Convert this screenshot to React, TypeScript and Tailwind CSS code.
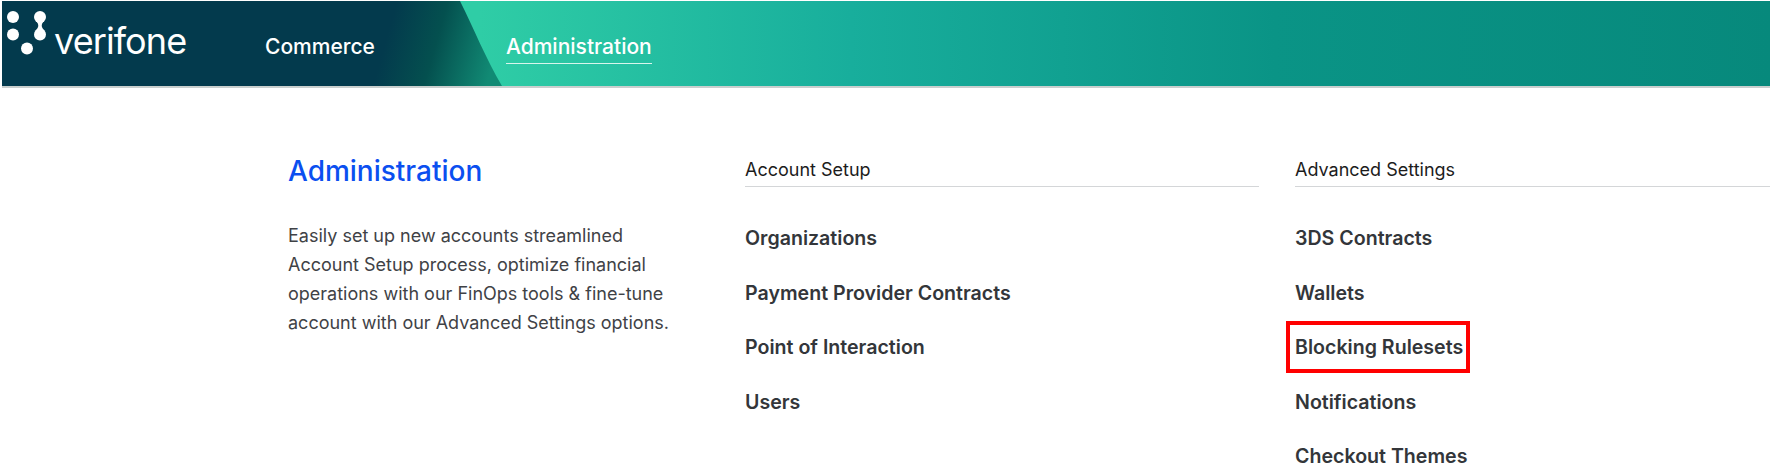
const accountSetup = ["Organizations", "Payment Provider Contracts", "Point of Interaction", "Users"];
const advancedSettings = ["3DS Contracts", "Wallets", "Blocking Rulesets", "Notifications", "Checkout Themes"];

function Logo() {
  return (
    <div className="flex w-[233px] shrink-0 items-start">
      <svg width="52" height="62" viewBox="0 0 52 62" className="shrink-0" fill="#fff">
        <circle cx="11" cy="16" r="6" />
        <circle cx="11" cy="33.5" r="6" />
        <circle cx="38" cy="16" r="6" />
        <circle cx="38" cy="33.5" r="6" />
        <circle cx="25" cy="47.5" r="6" />
        <path d="M34 20 C37 23 37 26 34 29 L42 29 C39 26 39 23 42 20 Z" />
      </svg>
      <span className="mt-[20px] text-[36px] leading-[40px] tracking-[-0.9px] text-white font-normal">verifone</span>
    </div>
  );
}

function HeaderBackdrop() {
  return (
    <svg className="absolute inset-0 h-full w-full" viewBox="0 0 1768 85" preserveAspectRatio="none">
      <defs>
        <linearGradient id="teal" x1="0" x2="1" y1="0" y2="0">
          <stop offset="0" stopColor="#2fd0a4" />
          <stop offset="0.27" stopColor="#2fcda6" />
          <stop offset="0.48" stopColor="#18ae9c" />
          <stop offset="0.72" stopColor="#0a9486" />
          <stop offset="1" stopColor="#07897c" />
        </linearGradient>
        <linearGradient id="fade" gradientUnits="userSpaceOnUse" x1="395" y1="0" x2="500" y2="30">
          <stop offset="0" stopColor="#033a4d" />
          <stop offset="0.45" stopColor="#04504f" />
          <stop offset="1" stopColor="#118a74" />
        </linearGradient>
      </defs>
      <rect width="1768" height="85" fill="url(#teal)" />
      <path d="M0 0 H458 C472 28 484 58 500 85 H0 Z" fill="url(#fade)" />
    </svg>
  );
}

function MenuColumn({ title, items, className }: { title: string; items: string[]; className: string }) {
  return (
    <section className={className}>
      <h2 className="h-[43px] border-b border-[#d4d6d8] pt-[14px] text-[18px] leading-[24px] font-normal text-[#1c1c1c]">
        {title}
      </h2>
      <ul className="pt-[38px]">
        {items.map((item) => (
          <li key={item} className="relative h-[54.5px] text-[19.6px] leading-[27px] font-semibold text-[#33363a]">
            {item}
            {item === "Blocking Rulesets" && (
              <span className="absolute top-[-13px] left-[-9px] h-[52px] w-[184px] border-4 border-[#ff0000]" />
            )}
          </li>
        ))}
      </ul>
    </section>
  );
}

export default function App() {
  return (
    <main className="h-[472px] w-[1770px] overflow-hidden bg-white font-['Inter',sans-serif]">
      <div className="pt-px pl-[2px]">
        <header className="relative flex h-[85px] items-start text-white">
          <HeaderBackdrop />
          <div className="relative flex items-start">
            <Logo />
            <nav className="ml-[30px] flex gap-[129px] pt-[32px] text-[21px] leading-[28px] font-medium">
              <a className="w-[112px]">Commerce</a>
              <a className="h-[31px] w-[146px] border-b border-[#d8f5ec]">Administration</a>
            </nav>
          </div>
        </header>
        <div className="h-[2px] bg-[#c9cfce]" />
      </div>
      <div className="flex pt-[56px] pl-[288px]">
        <section className="w-[457px] shrink-0">
          <h1 className="pt-[2px] text-[28px] leading-[50px] font-medium text-[#0b4ff0]">Administration</h1>
          <p className="mt-[25px] w-[392px] text-[18px] leading-[29px] text-[#3f4246]">
            Easily set up new accounts streamlined Account Setup process, optimize financial operations with our FinOps tools &amp; fine-tune account with our Advanced Settings options.
          </p>
        </section>
        <MenuColumn title="Account Setup" items={accountSetup} className="w-[514px] shrink-0" />
        <MenuColumn title="Advanced Settings" items={advancedSettings} className="ml-[36px] w-[475px] shrink-0" />
      </div>
    </main>
  );
}
